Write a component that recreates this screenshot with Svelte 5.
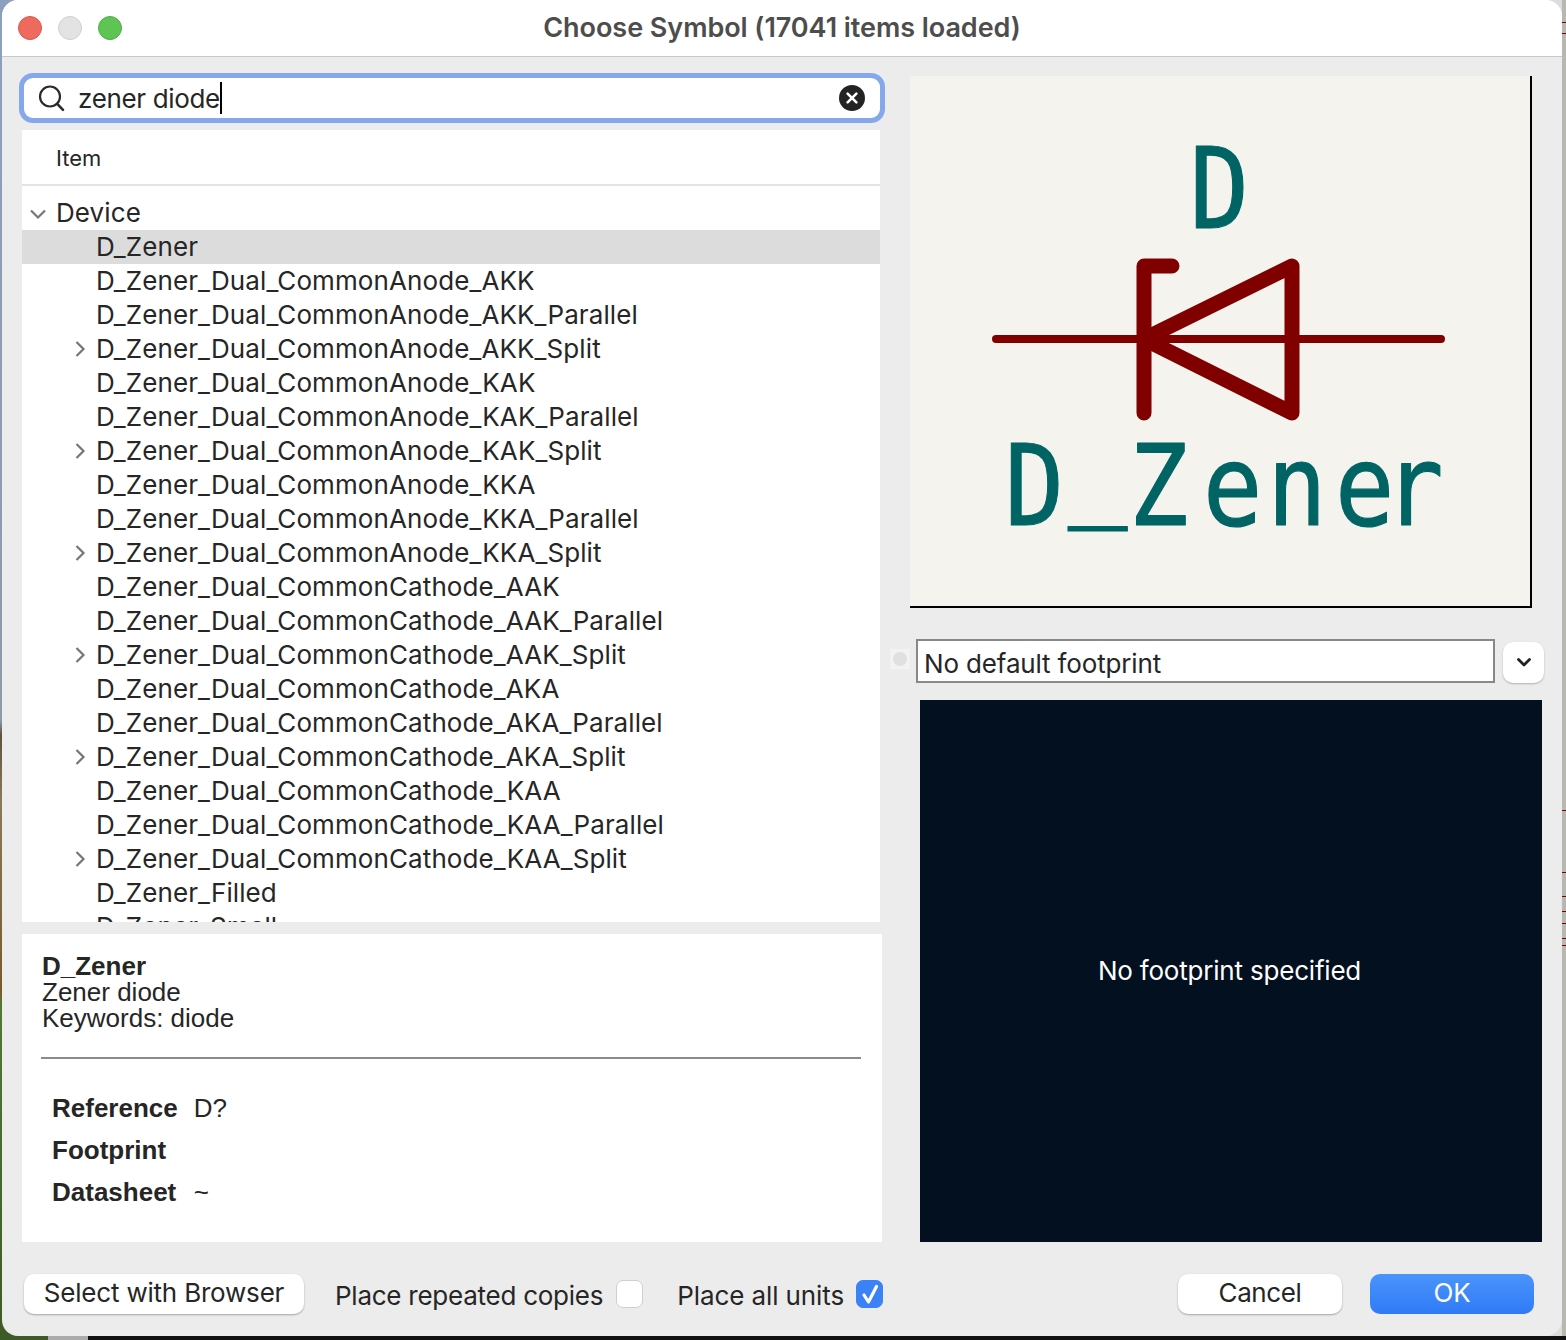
<script>
  const rows = [
    ['D_Zener', false, true],
    ['D_Zener_Dual_CommonAnode_AKK', false],
    ['D_Zener_Dual_CommonAnode_AKK_Parallel', false],
    ['D_Zener_Dual_CommonAnode_AKK_Split', true],
    ['D_Zener_Dual_CommonAnode_KAK', false],
    ['D_Zener_Dual_CommonAnode_KAK_Parallel', false],
    ['D_Zener_Dual_CommonAnode_KAK_Split', true],
    ['D_Zener_Dual_CommonAnode_KKA', false],
    ['D_Zener_Dual_CommonAnode_KKA_Parallel', false],
    ['D_Zener_Dual_CommonAnode_KKA_Split', true],
    ['D_Zener_Dual_CommonCathode_AAK', false],
    ['D_Zener_Dual_CommonCathode_AAK_Parallel', false],
    ['D_Zener_Dual_CommonCathode_AAK_Split', true],
    ['D_Zener_Dual_CommonCathode_AKA', false],
    ['D_Zener_Dual_CommonCathode_AKA_Parallel', false],
    ['D_Zener_Dual_CommonCathode_AKA_Split', true],
    ['D_Zener_Dual_CommonCathode_KAA', false],
    ['D_Zener_Dual_CommonCathode_KAA_Parallel', false],
    ['D_Zener_Dual_CommonCathode_KAA_Split', true],
    ['D_Zener_Filled', false],
    ['D_Zener_Small', false]
  ];
</script>

<div class="desktop">
  <div class="window">
    <header class="titlebar">
      <div class="lights">
        <span class="light red"></span>
        <span class="light grey"></span>
        <span class="light green"></span>
      </div>
      <div class="title">Choose Symbol (17041 items loaded)</div>
    </header>

    <div class="content">
      <div class="left">
        <div class="search">
          <svg class="glass" width="28" height="28" viewBox="0 0 28 28" aria-hidden="true">
            <circle cx="12" cy="11.5" r="10" fill="none" stroke="#2a2a2a" stroke-width="2.2" />
            <line x1="19.2" y1="18.8" x2="25" y2="24.8" stroke="#2a2a2a" stroke-width="2.6" stroke-linecap="round" />
          </svg>
          <span class="query">zener diode</span><span class="caret"></span>
          <svg class="clear" width="26" height="26" viewBox="0 0 26 26" aria-hidden="true">
            <circle cx="13" cy="13" r="13" fill="#232323" />
            <path d="M8.6 8.6 L17.4 17.4 M17.4 8.6 L8.6 17.4" stroke="#fff" stroke-width="2.6" stroke-linecap="round" />
          </svg>
        </div>

        <div class="tree">
          <div class="tree-head">Item</div>
          <div class="tree-body">
            <div class="row group">
              <svg class="chev-down" width="18" height="12" viewBox="0 0 18 12" aria-hidden="true">
                <path d="M2 2.5 L9 9.5 L16 2.5" fill="none" stroke="#767676" stroke-width="2.2" />
              </svg>
              <span>Device</span>
            </div>
            {#each rows as r}
              <div class="row item" class:selected={r[2]}>
                {#if r[1]}
                  <svg class="chev-right" width="12" height="18" viewBox="0 0 12 18" aria-hidden="true">
                    <path d="M2.5 2 L9.5 9 L2.5 16" fill="none" stroke="#767676" stroke-width="2.2" />
                  </svg>
                {/if}
                <span>{r[0]}</span>
              </div>
            {/each}
          </div>
        </div>

        <div class="details">
          <div class="summary">
            <b>D_Zener</b>
            <div>Zener diode</div>
            <div>Keywords: diode</div>
          </div>
          <hr />
          <dl class="fields">
            <dt>Reference</dt><dd>D?</dd>
            <dt>Footprint</dt><dd></dd>
            <dt>Datasheet</dt><dd>~</dd>
          </dl>
        </div>
      </div>

      <div class="right">
        <div class="symbol">
          <svg width="620" height="530" viewBox="0 0 620 530" role="img" aria-label="D_Zener symbol">
            <g fill="none" stroke="#800000" stroke-linecap="round" stroke-linejoin="round">
              <path d="M86 263 H531" stroke-width="8" />
              <path d="M234 190 H234 M234 337 V190 H262" stroke-width="15" />
              <path d="M382 190 V337 L234 263 Z" stroke-width="15" />
            </g>
            <g transform="scale(0.88 1)">
              <text class="ref" x="318" y="152">D</text>
              <text class="val" x="107.6 179.5 249 333 406 483 539" y="449 428 449 449 449 449 449">D_Zener</text>
            </g>
          </svg>
        </div>

        <div class="fp-row">
          <span class="radio"><i></i></span>
          <div class="fp-input">No default footprint</div>
          <div class="fp-drop">
            <svg width="16" height="11" viewBox="0 0 16 11" aria-hidden="true">
              <path d="M2.5 2.5 L8 8 L13.5 2.5" fill="none" stroke="#222" stroke-width="2.8" stroke-linecap="round" stroke-linejoin="round" />
            </svg>
          </div>
        </div>

        <div class="fp-view"><span>No footprint specified</span></div>
      </div>
    </div>

    <footer class="bottom">
      <div class="btn browser">Select with Browser</div>
      <label class="check first">
        <span class="lbl">Place repeated copies</span>
        <span class="box"></span>
      </label>
      <label class="check second">
        <span class="lbl">Place all units</span>
        <span class="box on">
          <svg width="22" height="24" viewBox="0 0 22 24" aria-hidden="true">
            <path d="M5 13 L9.5 20 L17.5 4.5" fill="none" stroke="#fff" stroke-width="3.2" stroke-linecap="round" stroke-linejoin="round" />
          </svg>
        </span>
      </label>
      <div class="spacer"></div>
      <div class="btn cancel">Cancel</div>
      <div class="btn ok">OK</div>
    </footer>
  </div>
</div>

<style>
  :global(body) {
    margin: 0;
    background: #e8e8e8;
  }
  .desktop {
    width: 1566px;
    height: 1340px;
    overflow: hidden;
    background:
      linear-gradient(90deg, #3e5a26 0, #3e5a26 48px, #ababab 48px, #ababab 88px, #111 88px) left bottom / 100% 4px no-repeat,
      linear-gradient(#8d9fc0 0, #8f9aa8 720px, #5f5240 735px, #8a7a58 800px, #7a5a2a 990px, #4f7a34 1005px, #3e5a26 1340px) left top / 20px 100% no-repeat,
      linear-gradient(#b8b8b0 0, #b8b8b0 22px, #800000 22px, #800000 23px, #b8b8b0 23px, #b8b8b0 33px, #800000 33px, #800000 34px, #b8b8b0 34px, #b8b8b0 810px, #800000 810px, #800000 811px, #b8b8b0 811px, #b8b8b0 872px, #800000 872px, #800000 873px, #b8b8b0 873px, #b8b8b0 896px, #800000 896px, #800000 897px, #b8b8b0 897px, #b8b8b0 911px, #800000 911px, #800000 912px, #b8b8b0 912px, #b8b8b0 923px, #800000 923px, #800000 924px, #b8b8b0 924px, #b8b8b0 938px, #800000 938px, #800000 939px, #b8b8b0 939px, #b8b8b0 945px, #800000 945px, #800000 946px, #b8b8b0 946px, #b8b8b0 100%) right top / 4px 100% no-repeat,
      #dcdcdc;
    font-family: Inter, "Noto Sans", sans-serif;
    color: #262626;
  }
  .window {
    width: 1560px;
    height: 1336px;
    margin-left: 2px;
    border-radius: 16px;
    overflow: hidden;
    background: #ececec;
    display: flex;
    flex-direction: column;
  }
  .titlebar {
    height: 56px;
    flex: none;
    background: #fff;
    border-bottom: 1px solid #c9c9c9;
    position: relative;
    display: flex;
    align-items: center;
    justify-content: center;
  }
  .lights {
    position: absolute;
    left: 16px;
    top: 16px;
    display: flex;
    gap: 16px;
  }
  .light {
    width: 24px;
    height: 24px;
    border-radius: 50%;
    box-sizing: border-box;
  }
  .red { background: #ee6a5f; border: 1px solid #d8574d; }
  .grey { background: #e3e3e3; border: 1px solid #cfcfcf; }
  .green { background: #5ec454; border: 1px solid #50ad46; }
  .title {
    font-size: 27px;
    font-weight: 600;
    color: #4d4d4d;
    letter-spacing: -0.05px;
    margin-top: -2px;
  }

  .content {
    display: flex;
    flex: none;
    padding: 21px 0 0 18px;
    height: 1185px;
    box-sizing: border-box;
  }
  .left {
    width: 860px;
    flex: none;
    display: flex;
    flex-direction: column;
  }
  .search {
    width: 856px;
    height: 40px;
    margin: 0 0 0 4px;
    box-sizing: border-box;
    background: #fff;
    border-radius: 9px;
    box-shadow: 0 0 0 5px #85a8ec;
    display: flex;
    align-items: center;
    padding-left: 14px;
    flex: none;
  }
  .glass { flex: none; margin-top: 1px; }
  .query {
    margin-left: 12px;
    font-size: 26px;
    line-height: 40px;
    letter-spacing: -0.35px;
    padding-top: 2px;
  }
  .caret {
    width: 2px;
    height: 32px;
    background: #000;
    margin-left: 0;
  }
  .clear { margin-left: auto; margin-right: 15px; }

  .tree {
    width: 858px;
    height: 792px;
    margin: 12px 0 0 2px;
    background: #fff;
    overflow: hidden;
    flex: none;
  }
  .tree-head {
    height: 54px;
    box-sizing: content-box;
    border-bottom: 2px solid #e4e4e4;
    padding-left: 34px;
    font-size: 22px;
    line-height: 56px;
  }
  .tree-body { padding-top: 10px; }
  .row {
    height: 34px;
    line-height: 34px;
    font-size: 26px;
    letter-spacing: 0.1px;
    white-space: nowrap;
    position: relative;
    padding-left: 74px;
  }
  .row.group { padding-left: 34px; }
  .selected { background: #dcdcdc; }
  .chev-down { position: absolute; left: 7px; top: 12px; }
  .chev-right { position: absolute; left: 52px; top: 8px; }

  .details {
    width: 860px;
    height: 308px;
    margin: 12px 0 0 2px;
    background: #fff;
    box-sizing: border-box;
    padding: 19px 20px 0 20px;
    font-family: "Liberation Sans", Arial, sans-serif;
    font-size: 26px;
    line-height: 26px;
    flex: none;
  }
  .summary b { display: block; }
  hr {
    border: 0;
    height: 2px;
    background: #8a8a8a;
    margin: 26px 0 0 -1px;
    width: 820px;
  }
  .fields {
    margin: 28px 0 0 10px;
    display: grid;
    grid-template-columns: auto 1fr;
    grid-auto-rows: 42px;
    column-gap: 16px;
    align-items: center;
  }
  dt { font-weight: 700; }
  dd { margin: 0; }

  .right {
    width: 660px;
    flex: none;
    padding-left: 30px;
    box-sizing: border-box;
    display: flex;
    flex-direction: column;
    margin-top: -2px;
  }
  .symbol {
    width: 622px;
    height: 532px;
    flex: none;
    box-sizing: border-box;
    background: #f4f3ee;
    border-right: 2px solid #000;
    border-bottom: 2px solid #000;
  }
  .symbol svg { display: block; }
  .symbol text {
    font-family: "DejaVu Sans Mono", monospace;
    font-size: 112px;
    fill: #006464;
    stroke: #006464;
    stroke-width: 1.2px;
    stroke-linejoin: round;
  }
  .fp-row {
    position: relative;
    margin-top: 31px;
    height: 44px;
    flex: none;
    display: flex;
    align-items: flex-start;
  }
  .radio {
    position: absolute;
    left: -20px;
    top: 10px;
    width: 20px;
    height: 20px;
    background: #f2f2f2;
    display: flex;
    align-items: center;
    justify-content: center;
  }
  .radio i {
    width: 14px;
    height: 14px;
    border-radius: 50%;
    background: #e0e0e0;
  }
  .fp-input {
    margin-left: 6px;
    width: 579px;
    height: 44px;
    flex: none;
    box-sizing: border-box;
    background: #fff;
    border: 2px solid #888;
    padding: 2px 0 0 6px;
    font-size: 26px;
    line-height: 42px;
    letter-spacing: -0.15px;
  }
  .fp-drop {
    width: 41px;
    height: 41px;
    flex: none;
    margin: 3px 0 0 8px;
    background: #fff;
    border-radius: 10px;
    box-shadow: 0 1px 2px rgba(0, 0, 0, 0.25);
    display: flex;
    align-items: center;
    justify-content: center;
  }
  .fp-view {
    width: 622px;
    height: 542px;
    margin: 17px 0 0 10px;
    background: #02101f;
    color: #fff;
    font-size: 26px;
    letter-spacing: -0.2px;
    display: flex;
    align-items: center;
    justify-content: center;
    flex: none;
  }
  .fp-view span { margin-top: -2px; margin-right: 3px; }

  .bottom {
    display: flex;
    align-items: flex-start;
    padding: 32px 0 0 22px;
    flex: none;
    font-size: 26px;
  }
  .btn {
    height: 40px;
    box-sizing: border-box;
    border-radius: 10px;
    background: #fff;
    box-shadow: 0 1px 2px rgba(0, 0, 0, 0.3);
    display: flex;
    align-items: center;
    justify-content: center;
    line-height: 36px;
    padding-bottom: 2px;
    letter-spacing: -0.2px;
  }
  .browser { width: 280px; }
  .cancel { width: 164px; letter-spacing: -0.4px; }
  .ok {
    width: 164px;
    margin: 0 28px 0 28px;
    background: linear-gradient(#4a94fb, #2f7bf6);
    color: #fff;
    box-shadow: none;
  }
  .spacer { flex: 1; }
  .check {
    display: flex;
    align-items: center;
    height: 40px;
  }
  .lbl { padding-top: 2px; letter-spacing: -0.25px; }
  .second .lbl { letter-spacing: -0.1px; }
  .first { margin-left: 31px; }
  .second { margin-left: 34px; }
  .box {
    width: 27px;
    height: 28px;
    flex: none;
    box-sizing: border-box;
    margin-left: 13px;
    border-radius: 7px;
    background: #fff;
    border: 1px solid #cfcfcf;
    display: flex;
    align-items: center;
    justify-content: center;
  }
  .box.on {
    margin-left: 12px;
    background: #3b82f6;
    border-color: #3b82f6;
  }
</style>
